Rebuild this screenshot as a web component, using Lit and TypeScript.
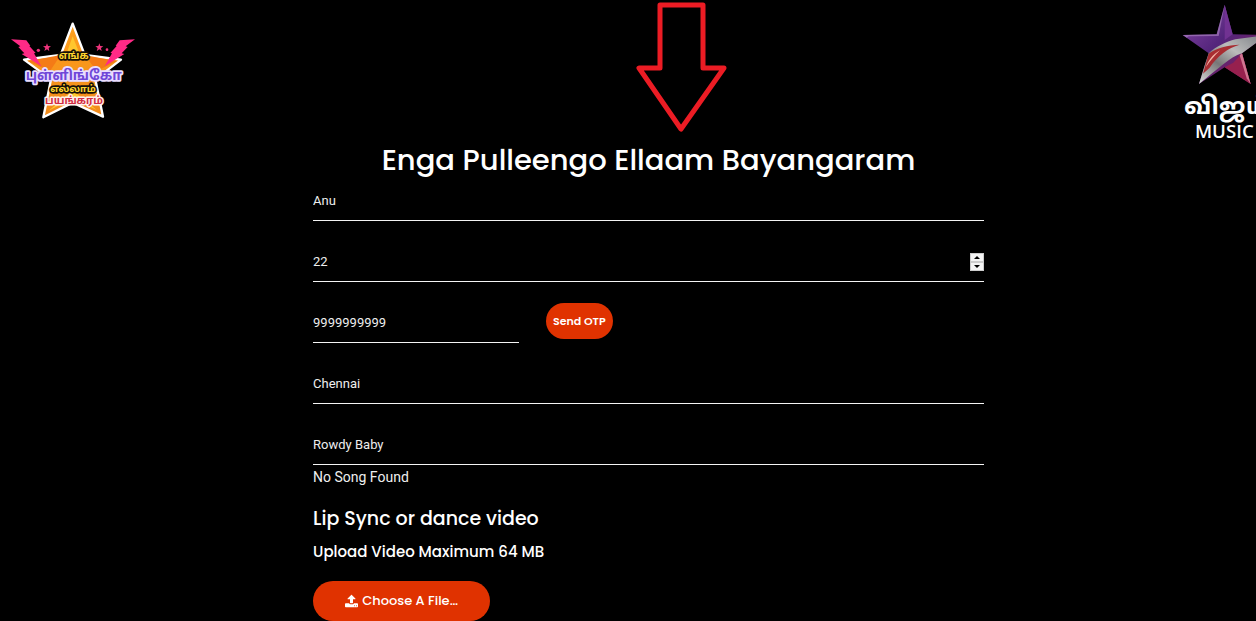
import { LitElement, html, css, svg } from "lit";
import { customElement, query } from "lit/decorators.js";

const showLogo = svg`
  <defs>
    <linearGradient id="gold" x1="0" y1="0" x2="0" y2="1">
      <stop offset="0" stop-color="#ffa01c" /><stop offset="1" stop-color="#f08a1c" />
    </linearGradient>
  </defs>
  <path d="M218 38 254 132 363 146 286 205 309 317 218 275 130 319 153 205 72 146 182 132Z"
    fill="url(#gold)" stroke="#fff" stroke-width="7" stroke-linejoin="round" />
  <path d="M218 76 240 132 198 132ZM218 238 290 297 218 262 146 299Z" fill="#ffc62d" />
  <path d="M254 132 350 151 290 180ZM182 132 84 151 150 180Z" fill="#f47b16" />
  <path d="M33 85 79 88 91 104 88 105 107 126 102 127 124 166 65 129 73 127 55 108 61 106Z" fill="#ff2a86" />
  <path d="M405 85 359 88 347 104 350 105 331 126 336 127 314 166 373 129 365 127 383 108 377 106Z" fill="#ff2a86" />
  <path d="m141 97 3 8 9 1-7 5 2 9-7-5-8 5 3-9-7-5 9-1ZM298 97l3 8 9 1-7 5 2 9-7-5-8 5 3-9-7-5 9-1Z" fill="#ef347c" />
  <circle cx="115" cy="118" r="5" fill="#ef347c" /><circle cx="321" cy="116" r="4" fill="#ef347c" />
  <g class="tamil" text-anchor="middle" paint-order="stroke" stroke-linejoin="round">
    <text x="221" y="144" font-size="30" fill="#ffd52d" stroke="#171008" stroke-width="10">எங்க</text>
    <text x="221" y="207" font-size="41" fill="#7047d8" stroke="#e9ddff" stroke-width="11">புள்ளிங்கோ</text>
    <text x="219" y="243" font-size="29" fill="#ffd52d" stroke="#171008" stroke-width="10">எல்லாம்</text>
    <text x="222" y="280" font-size="31" fill="#d22d42" stroke="#fff0ed" stroke-width="9">பயங்கரம்</text>
  </g>
`;

const channelLogo = svg`
  <defs>
    <linearGradient id="violet" x1="0" y1="0" x2="1" y2="1">
      <stop offset="0" stop-color="#8c49aa" /><stop offset=".45" stop-color="#53257b" /><stop offset="1" stop-color="#8e1c50" />
    </linearGradient>
    <linearGradient id="steel" x1="0" y1="1" x2="1" y2="0">
      <stop offset="0" stop-color="#ddd" /><stop offset=".35" stop-color="#777" /><stop offset=".6" stop-color="#bbb" /><stop offset="1" stop-color="#777b80" />
    </linearGradient>
  </defs>
  <path d="M164 14 188 103 290 105 216 160 242 252 164 202 87 252 116 160 38 105 140 103Z" fill="url(#violet)" />
  <path d="M164 14 188 103 164 120Z" fill="#713292" />
  <path d="M164 14 140 103 38 105 50 113 56 109 146 108Z" fill="#b18ac5" opacity=".6" />
  <path d="M216 160 242 252 164 202 190 188Z" fill="#97204e" />
  <path d="M242 252 216 160 209 166 230 235Z" fill="#d07591" />
  <path d="M116 160C138 139 168 126 196 118L290 105 216 160C178 172 145 207 87 252L105 193Z" fill="url(#steel)" />
  <path d="M116 161C139 144 174 135 209 134 173 144 144 166 119 203L99 221Z" fill="#a82d32" />
  <path d="M150 151C128 164 113 183 108 201 119 185 132 168 150 151Z" fill="#f3b4a6" />
  <g fill="#fff">
    <text class="tamil" x="42" y="342" font-size="72">விஜய்</text>
    <text class="music" x="163" y="413" font-size="56" text-anchor="middle">MUSIC</text>
  </g>
`;

@customElement("app-root")
export class AppRoot extends LitElement {
  static styles = css`
    * { box-sizing: border-box; }
    :host {
      display: block;
      min-height: 100vh;
      overflow: hidden;
      background: #000;
      color: #fff;
      font-family: Roboto, sans-serif;
      font-size: 13px;
    }
    .page {
      position: relative;
      display: grid;
      grid-template-columns: 7fr 15fr 7fr;
      align-items: start;
      width: calc(100% + 41px);
    }
    .show-logo { width: 124px; margin: 22px 11px; }
    .channel-logo { width: 86px; margin: 4px 29px; justify-self: end; }
    svg { display: block; overflow: visible; }
    .tamil { font-family: "Noto Sans Tamil", "Noto Sans", sans-serif; font-weight: 700; }
    .music { font-family: "Open Sans", sans-serif; font-weight: 600; }
    main { position: relative; padding-top: 140px; }
    .arrow {
      position: absolute;
      top: 0;
      left: calc(50% - 12px);
      width: 90px;
    }
    h1, h2, h3, p { margin: 0; }
    h1, h2, h3, .pill { font-family: Poppins, Inter, sans-serif; font-weight: 500; }
    h1 { font-size: 29px; line-height: 41px; text-align: center; white-space: nowrap; }
    form { display: flex; flex-direction: column; }
    .fields { display: grid; gap: 21px; }
    .field { position: relative; }
    input.text {
      display: block;
      width: 100%;
      height: 40px;
      padding: 0;
      border: 0;
      border-bottom: 1px solid #f4f4f4;
      border-radius: 0;
      outline: 0;
      background: transparent;
      color: #eee;
      font: inherit;
      appearance: textfield;
    }
    input::-webkit-inner-spin-button { appearance: none; margin: 0; }
    .steps {
      position: absolute;
      right: 0;
      top: 11px;
      display: grid;
      width: 14px;
      height: 18px;
      background: #bbb;
    }
    .step {
      display: grid;
      place-items: center;
      padding: 0;
      border: 1px solid #ccc;
      background: #f4f4f4;
    }
    .phone {
      display: grid;
      grid-template-columns: 32fr 68fr;
      column-gap: 27px;
      align-items: start;
    }
    .pill {
      border: 0;
      background: #e03200;
      color: #fff;
      cursor: pointer;
    }
    .otp {
      justify-self: start;
      height: 36px;
      padding: 0 7px;
      border-radius: 18px;
      font-size: 11px;
      font-weight: 600;
    }
    .hint { font-size: 14px; line-height: 24px; color: #eee; }
    h2 { margin-top: 16px; font-size: 19px; line-height: 28px; }
    h3 { margin-top: 7px; font-size: 15px; line-height: 24px; }
    .file {
      display: flex;
      align-items: center;
      justify-content: center;
      gap: 4px;
      align-self: flex-start;
      width: 177px;
      height: 40px;
      margin-top: 17px;
      border-radius: 20px;
      font-size: 13px;
    }
    .file-input {
      position: absolute;
      width: 1px;
      height: 1px;
      overflow: hidden;
      opacity: 0;
    }
  `;

  @query("#age") private age!: HTMLInputElement;

  render() {
    return html`
      <div class="page">
        <svg class="show-logo" viewBox="33 33 372 290" role="img" aria-label="Enga Pulleengo Ellaam Bayangaram">${showLogo}</svg>
        <main>
          <svg class="arrow" viewBox="0 0 90 134" aria-hidden="true">
            <path d="M24 5H67V68H88L45 129 3 68H24Z" fill="none" stroke="#ec1c24" stroke-width="5" stroke-linejoin="round" />
          </svg>
          <h1>Enga Pulleengo Ellaam Bayangaram</h1>
          <form @submit=${(e: Event) => e.preventDefault()}>
            <div class="fields">
              <input class="text" type="text" aria-label="Name" value="Anu" />
              <div class="field">
                <input class="text" id="age" type="number" aria-label="Age" value="22" />
                <div class="steps">
                  <button class="step" type="button" tabindex="-1" aria-label="Increase age" @click=${() => this.age.stepUp()}>
                    <svg width="6" height="3" viewBox="0 0 6 3"><path d="M0 3 3 0 6 3Z" /></svg>
                  </button>
                  <button class="step" type="button" tabindex="-1" aria-label="Decrease age" @click=${() => this.age.stepDown()}>
                    <svg width="6" height="3" viewBox="0 0 6 3"><path d="M0 0H6L3 3Z" /></svg>
                  </button>
                </div>
              </div>
              <div class="phone">
                <input class="text" type="tel" aria-label="Phone number" value="9999999999" />
                <button class="pill otp" type="button">Send OTP</button>
              </div>
              <input class="text" type="text" aria-label="City" value="Chennai" />
              <input class="text" type="text" aria-label="Song" value="Rowdy Baby" />
            </div>
            <p class="hint">No Song Found</p>
            <h2>Lip Sync or dance video</h2>
            <h3>Upload Video Maximum 64 MB</h3>
            <input class="file-input" id="video" type="file" accept="video/*" />
            <label class="pill file" for="video">
              <svg width="13" height="13" viewBox="0 0 1664 1600" fill="currentColor" aria-hidden="true">
                <path d="M1280 1344a64 64 0 1 0-128 0 64 64 0 0 0 128 0Zm256 0a64 64 0 1 0-128 0 64 64 0 0 0 128 0Zm128-224v320c0 53-43 96-96 96H96c-53 0-96-43-96-96v-320c0-53 43-96 96-96h427c27 74 98 128 181 128h256c83 0 154-54 181-128h427c53 0 96 43 96 96Zm-325-648c-10 24-33 40-59 40h-256v448c0 35-29 64-64 64H704c-35 0-64-29-64-64V512H384c-26 0-49-16-59-40-10-23-5-51 14-69L787-45c12-13 29-19 45-19s33 6 45 19l448 448c19 18 24 46 14 69Z" />
              </svg>
              <span>Choose A File…</span>
            </label>
          </form>
        </main>
        <svg class="channel-logo" viewBox="36 12 258 408" role="img" aria-label="Vijay Music">${channelLogo}</svg>
      </div>
    `;
  }
}
